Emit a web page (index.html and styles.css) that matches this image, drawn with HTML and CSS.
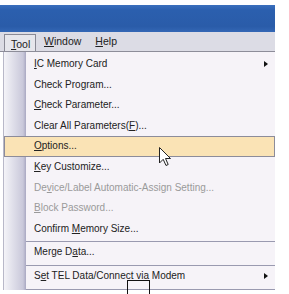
FILE: index.html
```html
<!DOCTYPE html>
<html lang="en">
<head>
    <meta charset="UTF-8">
    <title>Tool menu</title>
    <link rel="stylesheet" href="styles.css">
</head>
<body>
    <div class="window">
        <div class="titlebar"></div>
        <div class="menubar">
            <span class="top-item open"><u>T</u>ool</span>
            <span class="top-item"><u>W</u>indow</span>
            <span class="top-item"><u>H</u>elp</span>
        </div>
        <div class="menu">
            <div class="item sub"><u>I</u>C Memory Card</div>
            <div class="item">Check Program...</div>
            <div class="item"><u>C</u>heck Parameter...</div>
            <div class="item">Clear All Parameters(<u>F</u>)...</div>
            <div class="item hover"><u>O</u>ptions...</div>
            <div class="item"><u>K</u>ey Customize...</div>
            <div class="item off">De<u>v</u>ice/Label Automatic-Assign Setting...</div>
            <div class="item off"><u>B</u>lock Password...</div>
            <div class="item">Confirm <u>M</u>emory Size...</div>
            <div class="sep"></div>
            <div class="item">Merge D<u>a</u>ta...</div>
            <div class="sep"></div>
            <div class="item sub">S<u>e</u>t TEL Data/Connect vi<u>a</u> Modem</div>
            <div class="sep"></div>
        </div>

        <!-- mouse pointer over Options -->
        <svg class="pointer" width="13" height="20" viewBox="0 0 13 20">
            <path d="M0.5 0.5 L0.5 16 L4.2 12.3 L7 18.5 L9.2 17.5 L6.5 11.5 L11.5 11.5 Z" fill="#fff" stroke="#222" stroke-width="1"/>
        </svg>
        <div class="frame"></div>
    </div>
</body>
</html>
```

FILE: styles.css
```css
body {
    margin: 0;
    padding: 0;
    background: #fff;
    font-family: "Liberation Sans", Arial, sans-serif;
    font-size: 10px;
    color: #222;
}

.window {
    position: relative;
    width: 275px;
    height: 294px;
    padding-top: 5px;
    box-sizing: border-box;
    overflow: hidden;
}

.titlebar {
    height: 27px;
    background: linear-gradient(#3a6fbd, #2b5fae 20%, #2a5ca9 80%, #3467b5);
}

.menubar {
    display: flex;
    height: 19px;
    background: #dcdce5;
    border-bottom: 1px solid #8d8d99;
    padding-left: 4px;
    align-items: flex-end;
}

.top-item {
    padding: 0 0 3px 0;
    margin-left: 14px;
    font-size: 10.5px;
    line-height: 13px;
}

.top-item.open {
    width: 32px;
    height: 17px;
    box-sizing: border-box;
    padding: 3px 0 0 6px;
    margin-left: 0;
    margin-right: -6px;
    border: 1px solid #8a8a96;
    border-bottom: none;
    background: #e6e6ec;
}

.menu {
    margin-left: 3px;
    padding-top: 2px;
    border-left: 1px solid #b8b8c8;
    background: #f6f3f8;
    background-image: linear-gradient(90deg, #f4f4f8 0px, #c9c8da 19px, #a9a8c2 22px, #f6f3f8 22px);
}

.item {
    position: relative;
    height: 20.6px;
    line-height: 20.6px;
    padding-left: 30px;
    white-space: nowrap;
    box-sizing: border-box;
}

.item.hover {
    background: #fae3b5;
    border: 1px solid #8c8c9a;
    line-height: 18.6px;
    padding-left: 29px;
}

.item.off {
    color: #9a9a9a;
}

.item.sub::after {
    content: "";
    position: absolute;
    right: 7px;
    top: 7px;
    border-left: 4px solid #111;
    border-top: 3.5px solid transparent;
    border-bottom: 3.5px solid transparent;
}

.sep {
    height: 3px;
    margin-left: 22px;
    border-bottom: 1px solid #9a9ab0;
    box-sizing: border-box;
}

.pointer {
    position: absolute;
    left: 159px;
    top: 147px;
}

.frame {
    position: absolute;
    left: 127px;
    top: 280px;
    width: 21px;
    height: 20px;
    border: 1px solid #111;
    border-bottom: none;
}
```
